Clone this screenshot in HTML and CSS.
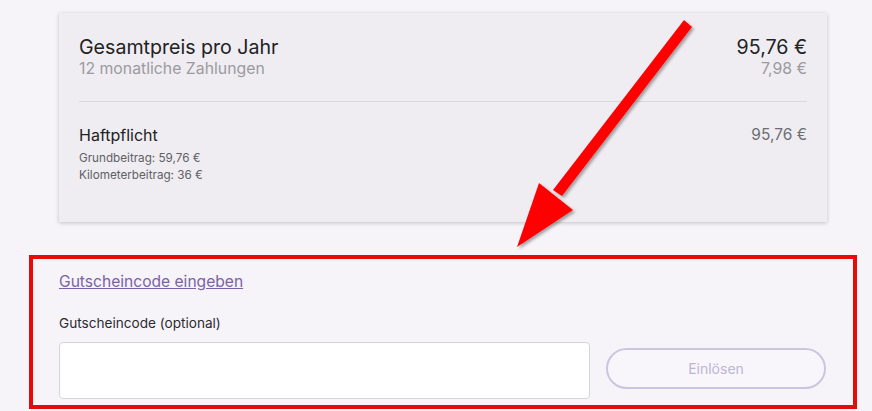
FILE: index.html
```html
<!DOCTYPE html>
<html lang="de">
<head>
    <meta charset="UTF-8">
    <meta name="viewport" content="width=device-width, initial-scale=1.0">
    <title>Gutschein</title>
    <link rel="stylesheet" href="styles.css">
</head>
<body>
    <div class="page">
        <div class="card">
            <div class="row total">
                <div>
                    <div class="title">Gesamtpreis pro Jahr</div>
                    <div class="sub">12 monatliche Zahlungen</div>
                </div>
                <div class="amounts">
                    <div class="price">95,76 €</div>
                    <div class="sub">7,98 €</div>
                </div>
            </div>
            <div class="row item">
                <div>
                    <div class="item-name">Haftpflicht</div>
                    <div class="detail">Grundbeitrag: 59,76 €</div>
                    <div class="detail">Kilometerbeitrag: 36 €</div>
                </div>
                <div class="item-price">95,76 €</div>
            </div>
        </div>

        <div class="coupon">
            <a href="#" class="coupon-link">Gutscheincode eingeben</a>
            <label for="code" class="coupon-label">Gutscheincode (optional)</label>
            <div class="coupon-row">
                <input type="text" id="code" class="coupon-input">
                <button type="button" class="coupon-btn">Einlösen</button>
            </div>
        </div>
    </div>

    <!-- annotation arrow -->
    <svg class="arrow" width="872" height="411" viewBox="0 0 872 411">
        <defs>
            <filter id="sh" x="-20%" y="-20%" width="140%" height="140%">
                <feDropShadow dx="2" dy="2" stdDeviation="1.5" flood-color="#000" flood-opacity="0.35"/>
            </filter>
        </defs>
        <g filter="url(#sh)" fill="#ff0000">
            <polygon points="684,20 692,27 562,196 553,190"/>
            <polygon points="539,183 573,210 517,247"/>
        </g>
    </svg>
</body>
</html>
```

FILE: styles.css
```css
body {
    margin: 0;
    background: #f6f4f9;
    font-family: Inter, "Noto Sans", sans-serif;
    color: #222;
}
.page {
    padding: 13px 0 0 29px;
    width: 828px;
}
.card {
    margin-left: 30px;
    width: 768px;
    box-sizing: border-box;
    background: #efedf2;
    box-shadow: 0 1px 4px rgba(0, 0, 0, 0.22);
    padding: 22px 20px 0 20px;
    height: 209px;
}
.row {
    display: flex;
    justify-content: space-between;
}
.total {
    padding-bottom: 22px;
    border-bottom: 1px solid #d9d7dc;
}
.title {
    font-size: 19.6px;
    line-height: 24px;
}
.price {
    font-size: 19.6px;
    line-height: 24px;
}
.sub {
    font-size: 15.8px;
    line-height: 20px;
    color: #9c9a9f;
}
.amounts {
    text-align: right;
}
.item {
    padding-top: 22px;
}
.item-name {
    font-size: 16px;
    line-height: 22px;
    margin-bottom: 4px;
}
.detail {
    font-size: 11.7px;
    line-height: 17px;
    color: #616064;
}
.item-price {
    font-size: 15.5px;
    line-height: 22px;
    color: #6e6d72;
}
.coupon {
    margin-top: 33px;
    border: 4px solid #e50b0b;
    padding: 11px 26px 6px 26px;
    display: flex;
    flex-direction: column;
    align-items: flex-start;
}
.coupon-link {
    font-size: 15.6px;
    line-height: 24px;
    color: #7b62a8;
}
.coupon-label {
    font-size: 13.6px;
    line-height: 20px;
    margin-top: 19px;
    color: #2b2a30;
}
.coupon-row {
    display: flex;
    align-items: center;
    margin-top: 9px;
    width: 100%;
}
.coupon-input {
    width: 531px;
    height: 57px;
    box-sizing: border-box;
    border: 1px solid #d6d4da;
    border-radius: 4px;
    background: #fff;
}
.coupon-btn {
    margin: 0 0 4px 16px;
    width: 220px;
    height: 41px;
    border: 2px solid #cbc5df;
    border-radius: 21px;
    background: #f8f6fb;
    color: #bdb5d3;
    font-family: Inter, "Noto Sans", sans-serif;
    font-size: 14px;
}
.arrow {
    position: absolute;
    left: 0;
    top: 0;
    pointer-events: none;
}
```
